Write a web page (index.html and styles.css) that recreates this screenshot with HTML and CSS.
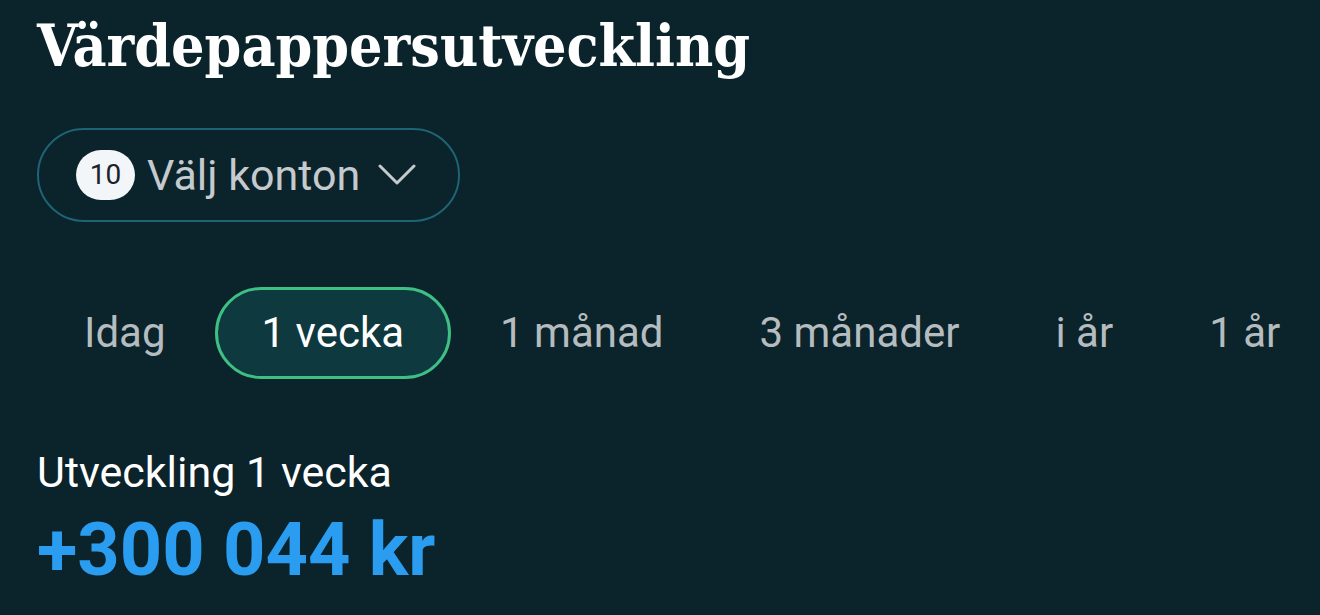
FILE: index.html
```html
<!DOCTYPE html>
<html>
<head>
    <title>Värdepappersutveckling</title>
    <link rel="stylesheet" href="styles.css">
</head>
<body>
    <h1 class="title">Värdepappersutveckling</h1>
    <!-- Account picker -->
    <button class="account-picker">
        <span class="badge">10</span>
        <span class="picker-label">Välj konton</span>
        <svg class="chevron" width="38" height="24" viewBox="0 0 38 24">
            <path d="M2 3 L19 20 L36 3" fill="none" stroke="#c4cacd" stroke-width="3" stroke-linecap="round" stroke-linejoin="round"></path>
        </svg>
    </button>
    <!-- Period tabs -->
    <div class="tabs">
        <span class="tab">Idag</span>
        <span class="tab active">1 vecka</span>
        <span class="tab">1 månad</span>
        <span class="tab">3 månader</span>
        <span class="tab">i år</span>
        <span class="tab">1 år</span>
    </div>
    <!-- Result -->
    <div class="result">
        <div class="result-label">Utveckling 1 vecka</div>
        <div class="result-value">+300 044 kr</div>
    </div>
</body>
</html>
```

FILE: styles.css
```css
html, body {
    margin: 0;
    height: 100%;
}
body {
    background-color: #0b232a;
    font-family: Roboto, "Noto Sans", sans-serif;
    color: #ffffff;
    padding: 0 37px;
    overflow: hidden;
}
.title {
    font-family: "DejaVu Serif Condensed", "DejaVu Serif", serif;
    font-weight: bold;
    font-size: 58.5px;
    line-height: 1;
    margin: 0;
    padding-top: 17px;
}
.account-picker {
    display: flex;
    align-items: center;
    gap: 12px;
    margin-top: 52px;
    height: 94px;
    padding: 0 42px 0 37px;
    background: transparent;
    border: 2px solid #1d6474;
    border-radius: 47px;
    box-sizing: border-box;
    font-family: inherit;
}
.badge {
    background: #f2f6f8;
    color: #1b2328;
    font-size: 28px;
    width: 59px;
    height: 50px;
    border-radius: 25px;
    display: flex;
    align-items: center;
    justify-content: center;
}
.picker-label {
    color: #c4cacd;
    font-size: 43px;
}
.chevron {
    margin-left: 6px;
}
.tabs {
    display: flex;
    gap: 2px;
    margin-top: 65px;
    white-space: nowrap;
}
.tab {
    color: #b5bcbf;
    font-size: 42px;
    padding: 0 44px;
    height: 92px;
    line-height: 86px;
    box-sizing: border-box;
    border: 3px solid transparent;
    border-radius: 46px;
}
.tab.active {
    color: #ffffff;
    background: #0d393f;
    border-color: #3fbf84;
}
.result {
    margin-top: 69px;
}
.result-label {
    font-size: 43px;
    line-height: 48px;
}
.result-value {
    font-weight: bold;
    font-size: 74px;
    color: #2a9df0;
    margin-top: 17px;
    line-height: 1;
}
```
